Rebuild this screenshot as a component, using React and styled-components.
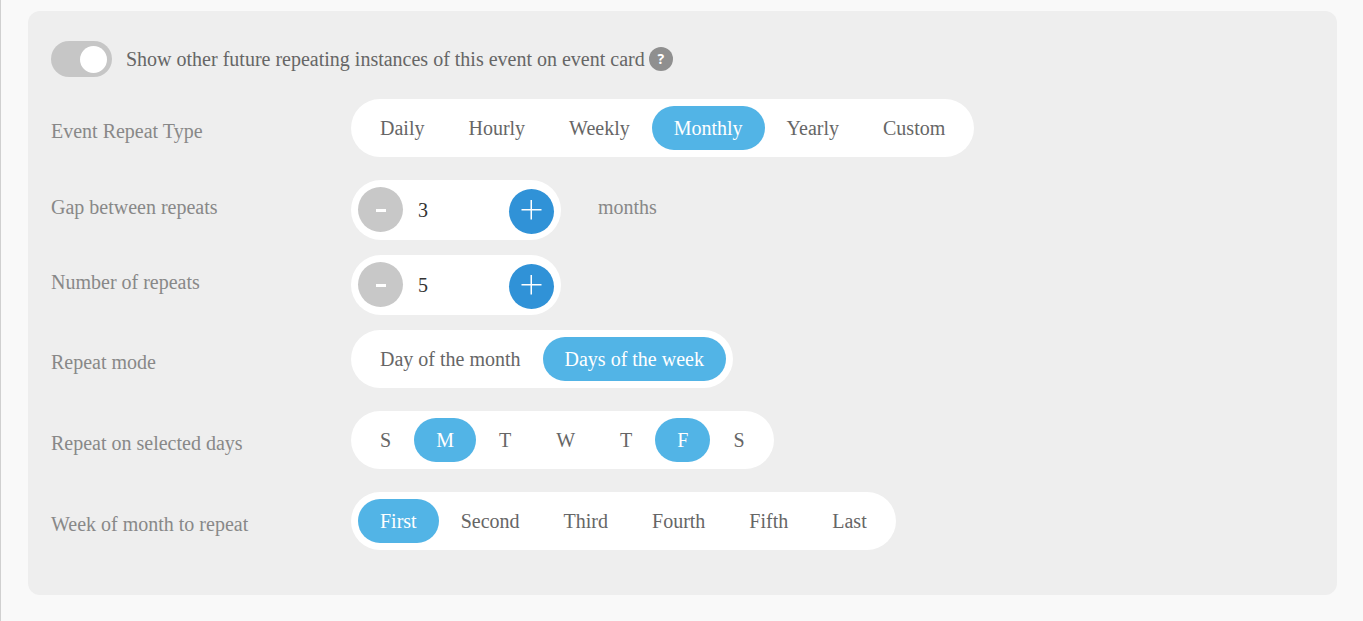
import React, { useState } from 'react'
import styled, { createGlobalStyle } from 'styled-components'

const GlobalStyle = createGlobalStyle`
    * {
        box-sizing:border-box;
    }
    body {
        margin:0;
        background-color:#f9f9f9;
        font-family:"Liberation Serif", "Times New Roman", serif;
        font-size:20px;
        color:#666;
    }
    button, input {
        font:inherit;
        border:none;
        margin:0;
        padding:0;
    }
    button {
        cursor:pointer;
    }
`

const Page = styled.main`
    min-height:100vh;
    padding:11px 26px 26px 27px;
    border-left:1px solid #d0d0d0;
`

const Panel = styled.section`
    padding:30px 23px 39px;
    border-radius:12px;
    background-color:#eee;
`

const ToggleRow = styled.div`
    display:flex;
    align-items:center;
    margin-bottom:22px;
`

const Switch = styled.input`
    appearance:none;
    display:flex;
    align-items:center;
    width:61px;
    height:36px;
    padding:0 5px;
    border-radius:18px;
    background-color:#c6c6c6;
    cursor:pointer;

    &::before {
        content:"";
        width:27px;
        height:27px;
        border-radius:50%;
        background-color:#fff;
    }

    &:checked::before {
        margin-left:auto;
    }
`

const SwitchLabel = styled.label`
    margin:0 4px 0 14px;
`

const Help = styled.button`
    width:24px;
    height:24px;
    border-radius:50%;
    background-color:#8f8f8f;
    color:#fff;
    font-family:"Open Sans", sans-serif;
    font-size:14px;
    font-weight:bold;
    line-height:22px;
`

const Row = styled.div`
    display:flex;
    align-items:flex-start;
    margin-bottom:${(props) => (props.$stepper ? '15px' : '17px')};
    line-height:${(props) => (props.$stepper ? '54px' : '64px')};

    &:last-child {
        margin-bottom:0;
    }
`

const RowLabel = styled.label`
    flex:0 0 300px;
    color:#888;
`

const Unit = styled.span`
    margin-left:37px;
    color:#888;
`

const Group = styled.div`
    display:flex;
    gap:${(props) => (props.$spaced ? '1px' : '0')};
    padding:7px;
    border-radius:29px;
    background-color:#fff;
`

const Option = styled.button`
    height:44px;
    padding:0 22px;
    border-radius:22px;
    background-color:${(props) => (props.$active ? '#52b4e6' : 'transparent')};
    color:${(props) => (props.$active ? '#fff' : '#666')};
    line-height:44px;
`

const StepperBox = styled.div`
    display:flex;
    width:210px;
    height:60px;
    padding:7px 7px 6px;
    border-radius:30px;
    background-color:#fff;
`

const StepButton = styled.button`
    display:flex;
    flex:0 0 45px;
    align-items:center;
    justify-content:center;
    align-self:${(props) => (props.$plus ? 'flex-end' : 'flex-start')};
    height:45px;
    border-radius:50%;
    background-color:${(props) => (props.$plus ? '#3092d7' : '#c8c8c8')};
`

const StepInput = styled.input`
    flex:1;
    min-width:0;
    height:45px;
    padding-left:15px;
    background-color:transparent;
    color:#333;
    outline:none;
`

const Stepper = ({ id, value, onChange }) => (
    <StepperBox>
        <StepButton type="button" aria-label="Decrease" onClick={() => onChange(Math.max(1, Number(value) - 1))}>
            <svg width="25" height="25" viewBox="0 0 25 25">
                <path d="M8 13.5h10" stroke="#fff" strokeWidth="3" />
            </svg>
        </StepButton>
        <StepInput id={id} type="text" value={value} onChange={(e) => onChange(e.target.value)} />
        <StepButton $plus type="button" aria-label="Increase" onClick={() => onChange(Number(value) + 1)}>
            <svg width="25" height="25" viewBox="0 0 25 25">
                <path d="M2.5 10.75h20M12.25 1v19.5" fill="none" stroke="#fff" strokeWidth="1.5" />
            </svg>
        </StepButton>
    </StepperBox>
)

const Options = ({ id, items, selected, onSelect, spaced }) => (
    <Group role="group" aria-labelledby={id} $spaced={spaced}>
        {items.map((item, i) => (
            <Option
                key={i}
                type="button"
                $active={selected.includes(i)}
                aria-pressed={selected.includes(i)}
                onClick={() => onSelect(i)}
            >
                {item}
            </Option>
        ))}
    </Group>
)

const types = ['Daily', 'Hourly', 'Weekly', 'Monthly', 'Yearly', 'Custom']
const modes = ['Day of the month', 'Days of the week']
const weekDays = ['S', 'M', 'T', 'W', 'T', 'F', 'S']
const weeks = ['First', 'Second', 'Third', 'Fourth', 'Fifth', 'Last']

export default function App() {
    const [showFuture, setShowFuture] = useState(true)
    const [type, setType] = useState(3)
    const [gap, setGap] = useState(3)
    const [count, setCount] = useState(5)
    const [mode, setMode] = useState(1)
    const [days, setDays] = useState([1, 5])
    const [week, setWeek] = useState([0])

    const toggle = (list, i) => (list.includes(i) ? list.filter((x) => x !== i) : [...list, i])

    return (
        <Page>
            <GlobalStyle />
            <Panel>
                <ToggleRow>
                    <Switch
                        id="show-future"
                        type="checkbox"
                        role="switch"
                        checked={showFuture}
                        onChange={(e) => setShowFuture(e.target.checked)}
                    />
                    <SwitchLabel htmlFor="show-future">
                        Show other future repeating instances of this event on event card
                    </SwitchLabel>
                    <Help type="button">?</Help>
                </ToggleRow>
                <Row>
                    <RowLabel as="span" id="repeat-type">Event Repeat Type</RowLabel>
                    <Options id="repeat-type" items={types} selected={[type]} onSelect={setType} />
                </Row>
                <Row $stepper>
                    <RowLabel htmlFor="gap">Gap between repeats</RowLabel>
                    <Stepper id="gap" value={gap} onChange={setGap} />
                    <Unit>months</Unit>
                </Row>
                <Row $stepper>
                    <RowLabel htmlFor="count">Number of repeats</RowLabel>
                    <Stepper id="count" value={count} onChange={setCount} />
                </Row>
                <Row>
                    <RowLabel as="span" id="repeat-mode">Repeat mode</RowLabel>
                    <Options id="repeat-mode" items={modes} selected={[mode]} onSelect={setMode} />
                </Row>
                <Row>
                    <RowLabel as="span" id="repeat-days">Repeat on selected days</RowLabel>
                    <Options id="repeat-days" items={weekDays} selected={days} spaced onSelect={(i) => setDays(toggle(days, i))} />
                </Row>
                <Row>
                    <RowLabel as="span" id="repeat-week">Week of month to repeat</RowLabel>
                    <Options id="repeat-week" items={weeks} selected={week} onSelect={(i) => setWeek(toggle(week, i))} />
                </Row>
            </Panel>
        </Page>
    )
}
